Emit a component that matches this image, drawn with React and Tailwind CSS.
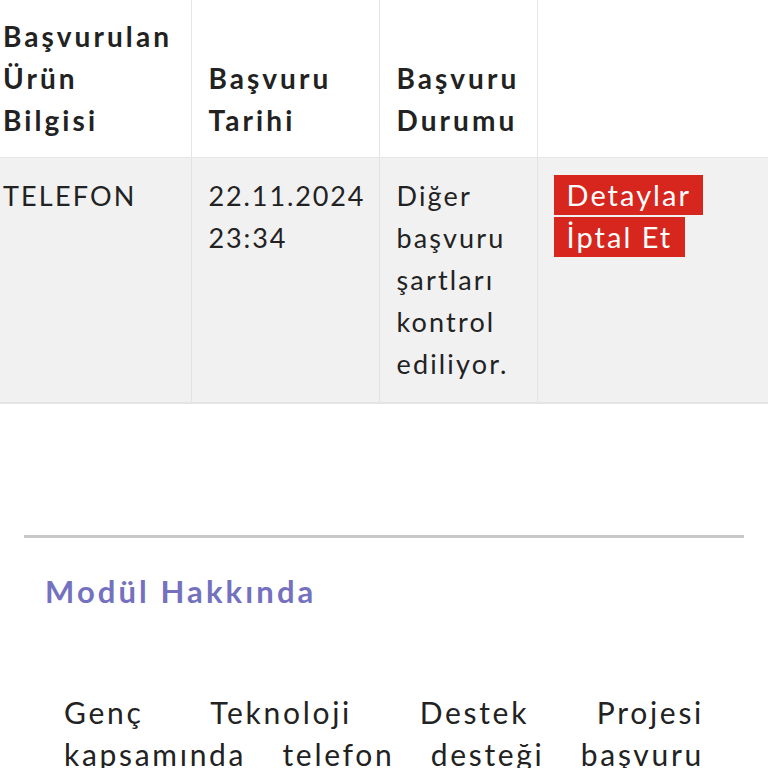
import React from 'react';

const rows = [
    {
        product: 'TELEFON',
        date: ['22.11.2024', '23:34'],
        status: 'Diğer başvuru şartları kontrol ediliyor.',
    },
];

const App = () => {
    return (
        <div className="w-[768px] h-[768px] overflow-hidden bg-white text-[#222] font-['Lato',sans-serif]">
            {/* Applications table */}
            <table className="border-collapse w-[900px] table-fixed">
                <colgroup>
                    <col className="w-[191px]" />
                    <col className="w-[188px]" />
                    <col className="w-[158px]" />
                    <col />
                </colgroup>
                <thead>
                    <tr className="border-b border-[#e6e6e6]">
                        <th className="pl-[3px] pr-[10px] pt-[15px] pb-[16px] text-left align-bottom text-[28px] leading-[42px] font-bold tracking-[0.11em] border-r border-[#e6e6e6]">
                            Başvurulan<br />Ürün<br />Bilgisi
                        </th>
                        <th className="pl-[17px] pr-[8px] pt-[15px] pb-[16px] text-left align-bottom text-[28px] leading-[42px] font-bold tracking-[0.11em] border-r border-[#e6e6e6]">
                            Başvuru<br />Tarihi
                        </th>
                        <th className="pl-[17px] pr-[8px] pt-[15px] pb-[16px] text-left align-bottom text-[28px] leading-[42px] font-bold tracking-[0.11em] border-r border-[#e6e6e6]">
                            Başvuru<br />Durumu
                        </th>
                        <th />
                    </tr>
                </thead>
                <tbody>
                    {rows.map((r, i) => (
                        <tr key={i} className="bg-[#f1f1f1] border-b-2 border-[#e4e4e4]">
                            <td className="pl-[3px] pr-[10px] py-[17px] align-top text-[27px] leading-[42px] tracking-[0.08em] border-r border-[#e3e3e3]">
                                {r.product}
                            </td>
                            <td className="pl-[17px] pr-[6px] py-[17px] align-top text-[27px] leading-[42px] tracking-[0.07em] border-r border-[#e3e3e3]">
                                {r.date[0]}
                                <br />
                                {r.date[1]}
                            </td>
                            <td className="pl-[17px] pr-[6px] py-[17px] align-top text-[27px] leading-[42px] tracking-[0.08em] border-r border-[#e3e3e3]">
                                {r.status}
                            </td>
                            <td className="pl-[16px] pr-[17px] py-[17px] align-top">
                                <div className="flex flex-col items-start gap-[2px]">
                                    <span className="bg-[#d7261e] text-white text-[29px] leading-[40px] tracking-[0.07em] pl-[13px] pr-[12px]">Detaylar</span>
                                    <span className="bg-[#d7261e] text-white text-[29px] leading-[40px] tracking-[0.07em] pl-[13px] pr-[13px]">İptal Et</span>
                                </div>
                            </td>
                        </tr>
                    ))}
                </tbody>
            </table>

            {/* About module */}
            <div className="px-[24px] pt-[131px]">
                <div className="h-[3px] bg-[#c9c9c9] w-[720px]" />
                <h2 className="mt-[33px] ml-[21px] text-[#7471bf] text-[31px] leading-[40px] font-bold tracking-[0.1em]">
                    Modül Hakkında
                </h2>
                <p className="mt-[80px] mx-[40px] text-[30px] leading-[42px] tracking-[0.09em] text-justify">
                    Genç Teknoloji Destek Projesi kapsamında telefon desteği başvuru sürecinizi bu ekrandan takip edebilirsiniz.
                </p>
            </div>
        </div>
    );
};

export default App;
